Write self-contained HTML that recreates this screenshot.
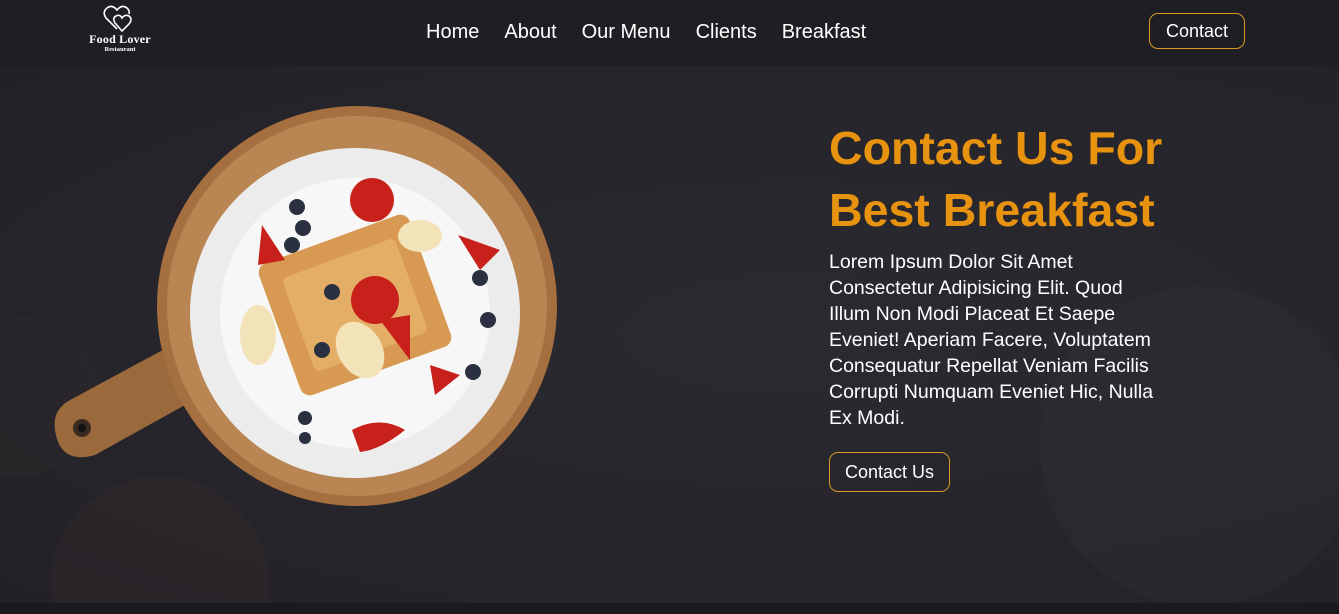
<!DOCTYPE html>
<html><head><style>
*{margin:0;padding:0;box-sizing:border-box}
body{width:1339px;height:614px;overflow:hidden;background:#1c1b20;font-family:"Liberation Sans",Arial,sans-serif;position:relative}
header{position:absolute;left:0;top:0;width:1339px;height:66px;background:#1f1e23}
.logo{position:absolute;left:86px;top:4px;width:68px;color:#fff;text-align:center}
.logo .t1{font-family:"Liberation Serif",serif;font-weight:bold;font-size:12px;margin-top:0px;letter-spacing:.2px}
.logo .t2{font-family:"Liberation Serif",serif;font-weight:bold;font-size:6.5px;margin-top:-1px}
nav{position:absolute;top:21px;left:426px;color:#fff;font-size:20px;white-space:nowrap}
nav span{margin-right:25px}
.cbtn{position:absolute;left:1149px;top:13px;width:96px;height:36px;border:1px solid #d99a26;border-radius:9px;color:#fff;font-size:18px;text-align:center;line-height:34px}
.hero{position:absolute;left:0;top:66px;width:1339px;height:537px;background:radial-gradient(ellipse at 60% 50%,#2b2a30,#25242a 70%,#222126)}
.bottom{position:absolute;left:0;top:603px;width:1339px;height:11px;background:#1a191d}
h1{position:absolute;left:829px;top:117px;color:#e8930f;font-size:46.5px;line-height:62px;font-weight:bold}
p{position:absolute;left:829px;top:249px;width:338px;color:#fff;font-size:19.5px;line-height:26px}
.hbtn{position:absolute;left:829px;top:452px;width:121px;height:40px;border:1px solid #d99a26;border-radius:9px;color:#fff;font-size:18px;text-align:center;line-height:38px}
</style></head><body>
<div class="hero">
<svg width="1339" height="537" style="position:absolute;left:0;top:0">
<circle cx="20" cy="330" r="80" fill="#2c2a2b" opacity=".4"/>
<circle cx="160" cy="520" r="110" fill="#3a2a2a" opacity=".25"/>
<circle cx="1200" cy="380" r="160" fill="#323136" opacity=".35"/>
<g transform="translate(0,-66)">
<path d="M70 400 L200 330 L230 380 L95 455 Q60 465 55 430 Q52 410 70 400Z" fill="#9a6a3c"/>
<circle cx="82" cy="428" r="9" fill="#3a2a20"/><circle cx="82" cy="428" r="4" fill="#111"/>
<circle cx="357" cy="306" r="200" fill="#a66f3f"/>
<circle cx="357" cy="306" r="190" fill="#b98552"/>
<circle cx="355" cy="313" r="165" fill="#ececec"/>
<circle cx="355" cy="313" r="135" fill="#f7f7f7"/>
<rect x="275" y="235" width="160" height="140" rx="10" transform="rotate(-20 355 305)" fill="#d89a52"/>
<rect x="295" y="255" width="120" height="100" rx="6" transform="rotate(-20 355 305)" fill="#e4ae66"/>
<ellipse cx="420" cy="236" rx="22" ry="16" fill="#f3e3b8"/>
<ellipse cx="360" cy="350" rx="22" ry="30" fill="#f3e3b8" transform="rotate(-30 360 350)"/>
<ellipse cx="258" cy="335" rx="18" ry="30" fill="#f3e3b8"/>
<circle cx="372" cy="200" r="22" fill="#c8201a"/><circle cx="375" cy="300" r="24" fill="#c8201a"/>
<path d="M262 225 L285 260 L258 265Z" fill="#c8201a"/><path d="M458 235 L500 250 L480 270Z" fill="#c8201a"/>
<path d="M380 320 L410 315 L410 360Z" fill="#c8201a"/><path d="M430 365 L460 375 L435 395Z" fill="#c8201a"/>
<path d="M352 430 Q380 415 405 430 Q380 450 360 452Z" fill="#c8201a"/>
<g fill="#2a3040"><circle cx="297" cy="207" r="8"/><circle cx="303" cy="228" r="8"/><circle cx="292" cy="245" r="8"/><circle cx="480" cy="278" r="8"/><circle cx="488" cy="320" r="8"/><circle cx="473" cy="372" r="8"/><circle cx="305" cy="418" r="7"/><circle cx="305" cy="438" r="6"/><circle cx="332" cy="292" r="8"/><circle cx="322" cy="350" r="8"/></g>
</g>
</svg>
</div>
<header>
<div class="logo">
<svg width="34" height="28" viewBox="0 0 34 28" style="display:block;margin:0 auto"><path d="M14 25 L3 14 Q-1 8 4 4 Q9 0 14 6 Q19 0 24 4 Q27 7 26 10" fill="none" stroke="#fff" stroke-width="1.6"/><path d="M19 27 L12 19 Q9 14 13 12 Q17 10 19 14 Q22 10 26 12 Q30 15 26 20Z" fill="none" stroke="#fff" stroke-width="1.6"/></svg>
<div class="t1">Food Lover</div><div class="t2">Restaurant</div>
</div>
<nav><span>Home</span><span>About</span><span>Our Menu</span><span>Clients</span><span>Breakfast</span></nav>
<div class="cbtn">Contact</div>
</header>
<h1>Contact Us For<br>Best Breakfast</h1>
<p>Lorem Ipsum Dolor Sit Amet Consectetur Adipisicing Elit. Quod Illum Non Modi Placeat Et Saepe Eveniet! Aperiam Facere, Voluptatem Consequatur Repellat Veniam Facilis Corrupti Numquam Eveniet Hic, Nulla Ex Modi.</p>
<div class="hbtn">Contact Us</div>
<div class="bottom"></div>
</body></html>
